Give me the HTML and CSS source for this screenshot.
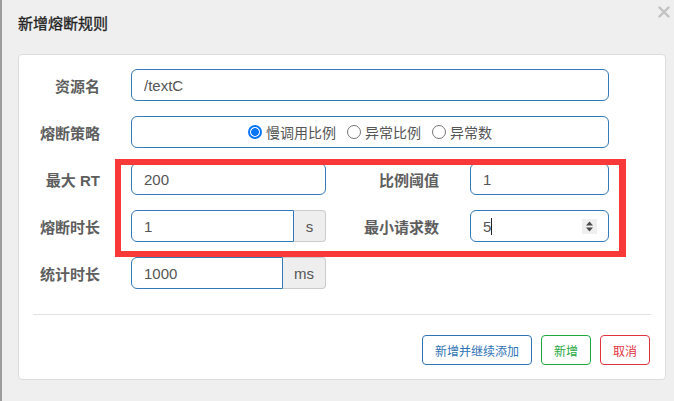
FILE: index.html
```html
<!DOCTYPE html>
<html lang="zh-CN">
<head>
<meta charset="utf-8">
<title>新增熔断规则</title>
<link rel="stylesheet" href="styles.css">
</head>
<body>
<div class="app">
  <div class="strip"></div>
  <div class="modal">
    <div class="modal-header">
      <div class="title">新增熔断规则</div>
      <svg class="close" width="12" height="12" viewBox="0 0 12 12"><path d="M1.5 1.5L10.5 10.5M10.5 1.5L1.5 10.5" stroke="#c2c2c2" stroke-width="2.4" stroke-linecap="round"/></svg>
    </div>
    <div class="card">
      <div class="form">
        <div class="label">资源名</div>
        <input class="input wide" type="text" value="/textC">

        <div class="label">熔断策略</div>
        <div class="radio-box wide">
          <label class="radio"><span class="dot checked"></span>慢调用比例</label>
          <label class="radio"><span class="dot"></span>异常比例</label>
          <label class="radio"><span class="dot"></span>异常数</label>
        </div>

        <div class="label">最大 RT</div>
        <input class="input" type="text" value="200">
        <div class="label">比例阈值</div>
        <input class="input" type="text" value="1">

        <div class="label">熔断时长</div>
        <div class="group">
          <input class="input grouped" type="text" value="1">
          <span class="addon">s</span>
        </div>
        <div class="label">最小请求数</div>
        <div class="input number">
          <span class="num-text">5</span><span class="caret"></span>
          <svg class="spin" width="15" height="15" viewBox="0 0 15 15"><rect width="15" height="15" fill="#efefef"/><path d="M7.5 2.5L11 6.5H4Z M7.5 12.5L11 8.5H4Z" fill="#4a4a4a"/></svg>
        </div>

        <div class="label">统计时长</div>
        <div class="group">
          <input class="input grouped" type="text" value="1000">
          <span class="addon">ms</span>
        </div>
      </div>
      <div class="divider"></div>
      <div class="footer">
        <button class="btn btn-blue">新增并继续添加</button>
        <button class="btn btn-green">新增</button>
        <button class="btn btn-red">取消</button>
      </div>
    </div>
  </div>
  <div class="highlight"></div>
</div>
</body>
</html>
```

FILE: styles.css
```css
* { box-sizing: border-box; }
html, body { margin: 0; padding: 0; }
body {
  background: #efefef;
  font-family: "Liberation Sans", Arial, "Noto Sans CJK SC", sans-serif;
  color: #555;
  width: 674px;
  height: 401px;
  overflow: hidden;
}
.app { position: relative; display: flex; height: 401px; }
.strip { width: 2px; background: #9c9c9c; flex: none; }
.modal { flex: 1; padding-left: 16px; }
.modal-header {
  display: flex;
  justify-content: space-between;
  align-items: flex-start;
  height: 54px;
}
.title {
  margin-top: 13px;
  font-size: 15px;
  line-height: 20px;
  color: #222;
  font-weight: normal;
  font-family: "Noto Sans CJK SC", sans-serif;
  -webkit-text-stroke: 0.3px #222;
}
.close { margin-top: 6px; margin-right: 4px; }
.card {
  width: 648px;
  background: #fff;
  border: 1px solid #dcdcdc;
  border-radius: 4px;
  padding-top: 14px;
  padding-bottom: 14px;
}
.form {
  display: grid;
  grid-template-columns: 112px 195px 144px 139px;
  row-gap: 15px;
  align-items: center;
}
.label {
  text-align: right;
  padding-right: 31px;
  font-size: 15px;
  font-weight: bold;
  color: #5e5e5e;
  font-family: "Liberation Sans", "Noto Sans CJK SC", sans-serif;
  white-space: nowrap;
}
.input {
  height: 32px;
  width: 100%;
  border: 1px solid #3479b8;
  border-radius: 6px;
  padding: 0 12px;
  font-size: 15px;
  color: #555;
  font-family: "Liberation Sans", Arial, sans-serif;
  background: #fff;
  outline: none;
  margin: 0;
}
.wide { grid-column: 2 / 5; }
.radio-box {
  height: 32px;
  border: 1px solid #3479b8;
  border-radius: 6px;
  display: flex;
  justify-content: center;
  align-items: center;
  gap: 11px;
  font-size: 14px;
  color: #555;
  font-family: "Noto Sans CJK SC", sans-serif;
}
.radio { display: flex; align-items: center; gap: 4px; }
.dot {
  width: 14px; height: 14px;
  border-radius: 50%;
  border: 1px solid #777;
  background: #fff;
}
.dot.checked {
  border: 2px solid #0a75f5;
  background: radial-gradient(circle, #0a75f5 0 3.6px, #fff 4.1px);
}
.group { display: flex; height: 32px; }
.grouped { flex: 1; border-radius: 6px 0 0 6px; }
.addon {
  display: flex; align-items: center; justify-content: center;
  padding: 0 11px;
  min-width: 32px;
  background: #eee;
  border: 1px solid #ccc;
  border-left: none;
  border-radius: 0 4px 4px 0;
  font-size: 15px;
  color: #555;
}
.number { display: flex; align-items: center; }
.num-text { font-size: 15px; }
.caret { width: 1px; height: 17px; background: #222; margin-left: 0; }
.spin { margin-left: auto; margin-right: -1px; }
.divider {
  margin: 25px 14px 20px 14px;
  border-top: 1px solid #e3e3e3;
}
.footer {
  display: flex;
  justify-content: flex-end;
  gap: 9px;
  padding-right: 15px;
}
.btn {
  height: 30px;
  padding: 0 12px;
  background: #fff;
  border: 1px solid;
  border-radius: 4px;
  font-size: 12px;
  font-family: "Noto Sans CJK SC", sans-serif;
}
.btn-blue { color: #2f73b5; border-color: #2f73b5; }
.btn-green { color: #1fa83e; border-color: #1fa83e; }
.btn-red { color: #e1323f; border-color: #e1323f; }
.highlight {
  position: absolute;
  left: 115px;
  top: 159px;
  width: 511px;
  height: 98px;
  border: 6px solid #f93939;
  border-right-width: 7px;
  pointer-events: none;
}
```
